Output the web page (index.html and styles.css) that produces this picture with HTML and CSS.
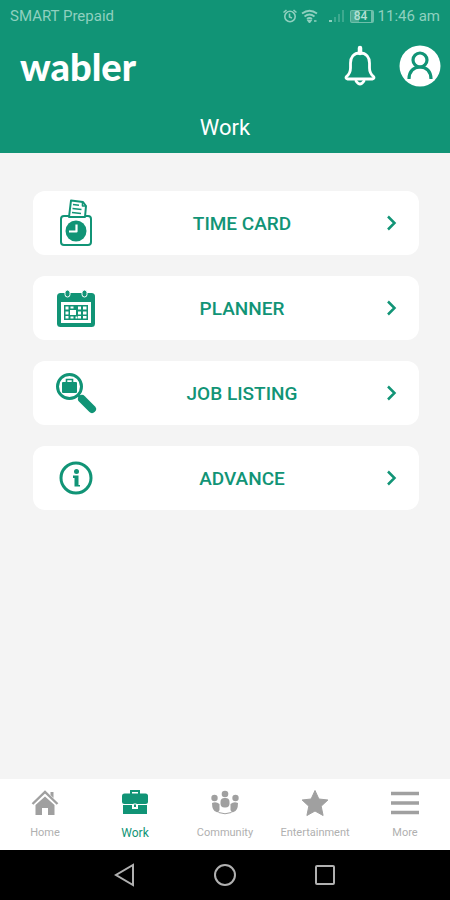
FILE: index.html
```html
<!DOCTYPE html>
<html lang="en">
  <head>
    <meta charset="utf-8">
    <meta name="viewport" content="width=device-width, initial-scale=1">
    <title>Work</title>
    <link rel="stylesheet" href="styles.css">
  </head>
  <body>
    <header class="header">
      <div class="status">
        <span>SMART Prepaid</span>
        <div class="status-right">
          <svg width="14" height="14" viewBox="0 0 14 14" fill="none" stroke="currentColor" stroke-width="1.6">
            <circle cx="7" cy="7.5" r="5.200"/>
            <path d="M.5 3.500 3.500 1M13.500 3.500 10.500 1M6.500 4.500V8L9 9"/>
          </svg>
          <svg class="wifi" width="18" height="14" viewBox="0 0 18 14" fill="none" stroke="currentColor" stroke-width="1.800">
            <path d="M1 4.500Q8.500-1 16 4.500M3.500 7.500Q8.500 3.500 13.500 7.500M6 10Q8.500 8 11 10"/>
            <path d="M7 11.500h3l-1.500 2zM13 12h2.500" stroke-width="1.500"/>
          </svg>
          <svg width="15" height="14" viewBox="0 0 15 14" fill="currentColor">
            <path d="M0 11h3v2H0z"/>
            <path d="M5 8h2v5H5zM9 5h2v8H9zM13 1h2v12h-2z" opacity=".35"/>
          </svg>
          <span class="battery">84</span>
          <span>11:46 am</span>
        </div>
      </div>
      <div class="brand">
        <a class="logo" href="#">wabler</a>
        <div class="actions">
          <button class="icon-btn" aria-label="Notifications">
            <svg width="32" height="42" viewBox="0 0 32 42" fill="none" stroke="#fff" stroke-width="2.800" stroke-linejoin="round" stroke-linecap="round">
              <path d="M16 3v5" stroke-width="4.500"/>
              <path d="M16 8C9.500 8 6.500 12.500 6.500 18v5c0 4-1.500 6.500-4 8.500-1 1-.5 2.500 1 2.500h25c1.500 0 2-1.500 1-2.500-2.500-2-4-4.500-4-8.500v-5C25.500 12.500 22.500 8 16 8z"/>
              <path d="M12 36q4 6 8 0"/>
            </svg>
          </button>
          <button class="icon-btn" aria-label="Profile">
            <svg width="42" height="42" viewBox="0 0 42 42">
              <circle cx="21" cy="21" r="20.500" fill="#fff"/>
              <g fill="none" stroke="#119476" stroke-width="3.200">
                <circle cx="21" cy="15" r="7"/>
                <path d="M10 34c0-7.500 4.500-12 11-12s11 4.500 11 12"/>
              </g>
            </svg>
          </button>
        </div>
      </div>
      <h1 class="title">Work</h1>
    </header>

    <main class="menu">
      <a class="card" href="#">
        <svg width="34" height="48" viewBox="0 0 34 48" fill="none" stroke="#119476" stroke-width="2" stroke-linejoin="round">
          <rect x="2" y="17" width="30" height="29" rx="3"/>
          <path d="M10 18 12 1.500l12 1.500 3 4-1 11z" fill="#fff"/>
          <path d="M23.500 3v4H27M14 5.500l6 .7M13.500 9.500l9 1M13 13.500l9 1" stroke-width="1.600"/>
          <circle cx="17" cy="32" r="10.500" fill="#119476" stroke="none"/>
          <path d="M17.500 25.500V32.500H10" stroke="#fff" stroke-width="2.200"/>
        </svg>
        <span class="label">TIME CARD</span>
        <svg class="chevron" width="12" height="16" viewBox="0 0 12 16"><path d="M2 1.500 8.500 8 2 14.500"/></svg>
      </a>
      <a class="card" href="#">
        <svg width="38" height="38" viewBox="0 0 38 38">
          <rect x="0" y="4" width="38" height="34" rx="3.500" fill="#119476"/>
          <rect x="4" y="13" width="30" height="21" fill="#fff"/>
          <rect x="7" y="16" width="24" height="15" fill="#119476"/>
          <path d="M8.500 17.500h3v3h-3zM8.500 22.500h3v3h-3zM8.500 27h3v2.500h-3zM13.500 17.500h3v2h-3zM13.500 27.500h3v2h-3zM13 21h6v5h-6zM18.500 27.500h2v2h-2zM21 17.500h3v3h-3zM21 22.500h3v3h-3zM21 27h3v2.500h-3zM26 17.500h3.500v3H26zM26 22.500h3.500v3H26zM26 27h3.500v2.500H26z" fill="#fff"/>
          <rect x="8" y="1" width="5" height="7" rx="2.500" fill="#119476" stroke="#fff"/>
          <rect x="25" y="1" width="5" height="7" rx="2.500" fill="#119476" stroke="#fff"/>
        </svg>
        <span class="label">PLANNER</span>
        <svg class="chevron" width="12" height="16" viewBox="0 0 12 16"><path d="M2 1.500 8.500 8 2 14.500"/></svg>
      </a>
      <a class="card" href="#">
        <svg width="42" height="42" viewBox="0 0 42 42">
          <circle cx="14.500" cy="14.500" r="12" fill="none" stroke="#119476" stroke-width="3"/>
          <rect x="7" y="10" width="15" height="11" rx="1" fill="#119476"/>
          <path d="M11.500 10V7.500h6V10" fill="none" stroke="#119476" stroke-width="1.600"/>
          <path d="M23 23l5 5" stroke="#119476" stroke-width="3"/>
          <path d="M27 27l10 10" stroke="#119476" stroke-width="8" stroke-linecap="round"/>
        </svg>
        <span class="label">JOB LISTING</span>
        <svg class="chevron" width="12" height="16" viewBox="0 0 12 16"><path d="M2 1.500 8.500 8 2 14.500"/></svg>
      </a>
      <a class="card" href="#">
        <svg width="34" height="34" viewBox="0 0 34 34">
          <circle cx="17" cy="17" r="15" fill="none" stroke="#119476" stroke-width="3"/>
          <circle cx="17.500" cy="10.500" r="2.500" fill="#119476"/>
          <path d="M14 14.500h5.500V24H21v1.500h-5.500v-8.500H14z" fill="#119476"/>
        </svg>
        <span class="label">ADVANCE</span>
        <svg class="chevron" width="12" height="16" viewBox="0 0 12 16"><path d="M2 1.500 8.500 8 2 14.500"/></svg>
      </a>
    </main>

    <nav class="tabs">
      <a class="tab" href="#">
        <svg width="28" height="28" viewBox="0 0 28 28" fill="#a0a0a0">
          <path d="M14 7.500 4.500 16v10H11v-7h6v7h6.500V16z"/>
          <path d="M1.500 15 14 3l12.500 12" fill="none" stroke="#a0a0a0" stroke-width="2.400"/>
          <path d="M19.500 3h3v6l-3-3z"/>
        </svg>
        <span>Home</span>
      </a>
      <a class="tab active" href="#">
        <svg width="28" height="28" viewBox="0 0 28 28" fill="#119476">
          <path d="M10 5V2h8v3" fill="none" stroke="#119476" stroke-width="2"/>
          <rect x="1" y="4.500" width="26" height="10.500" rx="2.500"/>
          <path d="M2 16h9v4h6v-4h9v9H2z"/>
          <path d="M12.500 15h3v3.500h-3z" stroke="#fff"/>
        </svg>
        <span>Work</span>
      </a>
      <a class="tab" href="#">
        <svg width="28" height="28" viewBox="0 0 28 28" fill="#a0a0a0">
          <circle cx="14" cy="5" r="3.300"/>
          <circle cx="3.500" cy="9" r="3.200"/>
          <circle cx="24.500" cy="9" r="3.200"/>
          <rect x="9.500" y="9" width="9" height="9.500" rx="4"/>
          <path d="M1 14q4-2 7.500 1v6q-1 3-3 2-4.500-1-4.500-9zM27 14q-4-2-7.500 1v6q1 3 3 2 4.500-1 4.500-9z"/>
          <path d="M7.500 23.500q6.500 2.500 13 0" fill="none" stroke="#a0a0a0"/>
        </svg>
        <span>Community</span>
      </a>
      <a class="tab" href="#">
        <svg width="28" height="28" viewBox="0 0 28 28" fill="#a0a0a0" stroke="#a0a0a0" stroke-linejoin="round">
          <path d="M14 1.500l3.900 8.500 9 1-6.700 6.200 1.900 9.300L14 22l-8.100 4.500 1.900-9.300L1.100 11l9-1z"/>
        </svg>
        <span>Entertainment</span>
      </a>
      <a class="tab" href="#">
        <svg width="28" height="28" viewBox="0 0 28 28" stroke="#a0a0a0" stroke-width="3.500">
          <path d="M0 4.500h28M0 14h28M0 23.500h28"/>
        </svg>
        <span>More</span>
      </a>
    </nav>

    <footer class="system">
      <button class="icon-btn" aria-label="Back">
        <svg width="24" height="24" viewBox="0 0 24 24"><path d="M20 2v20L3 12z"/></svg>
      </button>
      <button class="icon-btn" aria-label="Home screen">
        <svg width="24" height="24" viewBox="0 0 24 24"><circle cx="12" cy="12" r="10"/></svg>
      </button>
      <button class="icon-btn" aria-label="Recent apps">
        <svg width="24" height="24" viewBox="0 0 24 24"><rect x="3" y="3" width="18" height="18" rx="1"/></svg>
      </button>
    </footer>
  </body>
</html>
```

FILE: styles.css
```css
* {
  box-sizing: border-box;
}

body {
  margin: 0;
  min-height: 100vh;
  display: flex;
  flex-direction: column;
  background-color: #f4f4f4;
  font-family: Roboto, sans-serif;
}

a {
  text-decoration: none;
}

svg {
  display: block;
}

.header {
  background-color: #119476;
  color: white;
  padding-bottom: 11px;
}

.status {
  height: 32px;
  padding: 0 10px;
  display: flex;
  justify-content: space-between;
  align-items: center;
  font-size: 15px;
  color: #8fd0bf;
}

.status-right {
  display: flex;
  align-items: center;
  gap: 4px;
}

.wifi {
  margin-right: 6px;
}

.battery {
  width: 24px;
  height: 13px;
  margin-left: 2px;
  border: 1px solid #6dbfaa;
  border-right-width: 3px;
  border-radius: 2px;
  background: linear-gradient(to right, #4bac93 40%, transparent 40%);
  font-size: 12px;
  font-weight: 500;
  line-height: 11px;
  text-align: center;
  color: #b4e0d5;
}

.brand {
  height: 68px;
  padding: 0 9px 0 20px;
  display: flex;
  justify-content: space-between;
  align-items: center;
}

.logo {
  font-family: Lato, sans-serif;
  font-size: 38px;
  font-weight: 900;
  line-height: 40px;
  color: white;
}

.actions {
  display: flex;
  align-items: center;
  gap: 23px;
}

.icon-btn {
  padding: 0;
  border: none;
  background: none;
  cursor: pointer;
}

.title {
  margin: 0;
  padding-top: 14px;
  font-size: 22px;
  font-weight: 400;
  line-height: 28px;
  text-align: center;
}

.menu {
  flex: 1;
  padding: 38px 31px 38px 33px;
  display: flex;
  flex-direction: column;
  gap: 21px;
}

.card {
  height: 64px;
  display: grid;
  grid-template-columns: 86px 1fr 54px;
  align-items: center;
  justify-items: center;
  background-color: white;
  border-radius: 12px;
  color: #119476;
}

.label {
  font-size: 19px;
  font-weight: 500;
}

.chevron {
  fill: none;
  stroke: #119476;
  stroke-width: 2.5;
}

.tabs {
  height: 71px;
  display: grid;
  grid-template-columns: repeat(5, 1fr);
  background-color: white;
}

.tab {
  padding-top: 10px;
  display: flex;
  flex-direction: column;
  align-items: center;
  gap: 9px;
  font-size: 11px;
  line-height: 14px;
  color: #b0b0b0;
}

.tab.active {
  color: #119476;
  font-size: 12px;
}

.system {
  height: 50px;
  display: flex;
  justify-content: center;
  align-items: center;
  gap: 76px;
  background-color: black;
}

.system svg {
  fill: none;
  stroke: #b0b0b0;
  stroke-width: 2;
}
```
